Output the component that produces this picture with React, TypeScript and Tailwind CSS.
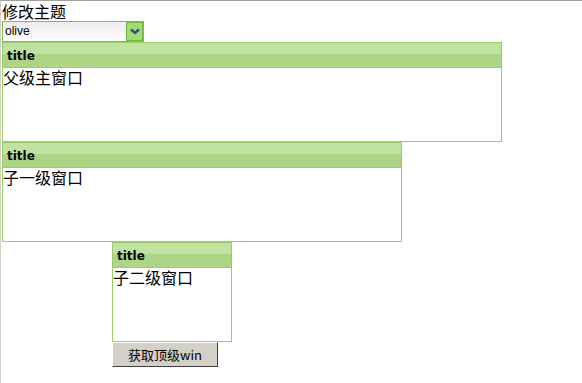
import React from "react";

const cjk = "font-['SimSun','Noto_Sans_CJK_SC',sans-serif]";

const Panel: React.FC<{ width: string; label: string; className?: string }> = ({ width, label, className }) => (
  <div className={`${width} h-[100px] border border-[#9acd68] bg-white flex flex-col ${className ?? ""}`}>
    <div className="h-[25px] border-b border-[#9acd68] flex flex-col relative">
      <div className="h-[11px] bg-[#c0e2a2]" />
      <div className="flex-1 bg-[#acd686]" />
      <span className="absolute left-[4px] top-[5px] text-[12px] font-bold text-black font-['DejaVu_Sans',sans-serif] leading-[16px]">
        title
      </span>
    </div>
    <div className={`text-[16px] leading-[18px] text-black ${cjk}`}>{label}</div>
  </div>
);

export default function App() {
  return (
    <div className="w-[582px] h-[383px] bg-white border-t border-[#a0a0a0] border-l border-l-[#d4d0c8] pl-[1px] overflow-hidden">
      <div className={`h-[20px] text-[16px] leading-[20px] text-black ${cjk}`}>修改主题</div>
      <div className="h-[21px] flex items-start">
        <div className="w-[142px] h-[21px] border border-[#7fbf4a] flex bg-gradient-to-b from-[#ececec] to-white">
          <span className="flex-1 text-[12px] leading-[19px] pl-[2px] text-black font-['Liberation_Sans',sans-serif]">olive</span>
          <div className="w-[17px] h-[19px] border border-[#6fb83c] bg-[#a6d874] flex items-center justify-center">
            <svg width="10" height="7" viewBox="0 0 10 7">
              <path d="M1 1.5 L5 5 L9 1.5" fill="none" stroke="#2b4a8c" strokeWidth="2.4" />
            </svg>
          </div>
        </div>
      </div>
      <Panel width="w-[500px]" label="父级主窗口" />
      <Panel width="w-[400px]" label="子一级窗口" />
      <Panel width="w-[120px]" label="子二级窗口" className="ml-[110px]" />
      <button
        className={`ml-[110px] w-[106px] h-[25px] bg-[#d4d0c8] border border-t-white border-l-white border-r-[#404040] border-b-[#404040] text-[13px] text-black ${cjk}`}
      >
        获取顶级win
      </button>
    </div>
  );
}
